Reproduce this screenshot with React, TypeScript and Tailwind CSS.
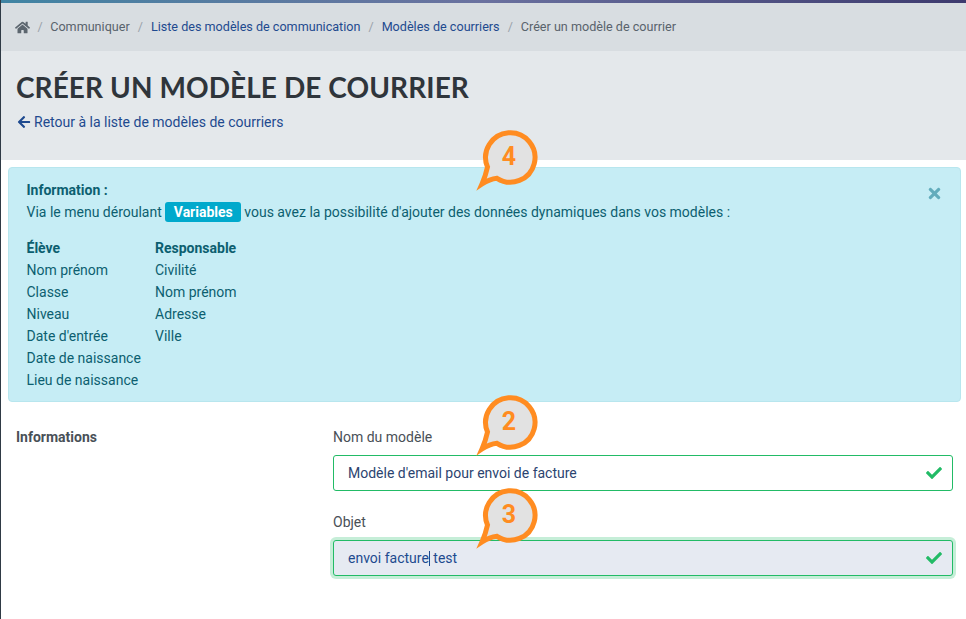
import { FaHome, FaArrowLeft, FaTimes, FaCheck } from "react-icons/fa";

function Callout({ n, className }: { n: string; className: string }) {
  return (
    <div className={`absolute w-[62px] h-[62px] ${className}`}>
      <svg width="62" height="62" viewBox="0 0 62 62" className="absolute inset-0 overflow-visible">
        <path
          d="M14.5 38 A24.7 24.7 0 1 1 24 49.3 Q16.5 50 9 55 Q12.5 47 14.5 38 Z"
          fill="#e2e2e2"
          stroke="#ff8c21"
          strokeWidth="5"
          strokeLinejoin="miter"
          strokeMiterlimit="10"
        />
      </svg>
      <span className="absolute left-[13px] top-[13px] w-[46px] text-center text-[25px] leading-[30px] font-bold text-[#ff8c21] font-['Roboto',sans-serif]">
        {n}
      </span>
    </div>
  );
}

const Sep = () => <span className="px-[8px] text-[#9aa3ab]">/</span>;

export default function App() {
  return (
    <div className="relative w-[966px] h-[619px] overflow-hidden bg-white border-l border-[#2f3a45] font-['Roboto',sans-serif] text-[14px] text-[#495057]">
      <div className="h-[3px] bg-gradient-to-r from-[#3f84a3] via-[#6a719f] to-[#3d3a6e]" />
      <nav className="h-[48px] bg-[#d8dde1] flex items-center pl-[14px] text-[12.6px] text-[#59636c]">
        <FaHome className="text-[15px] text-[#5c666f]" />
        <span className="px-[7.5px] text-[#9aa3ab]">/</span>
        <span>Communiquer</span>
        <Sep />
        <span className="text-[#1e4a8f]">Liste des modèles de communication</span>
        <Sep />
        <span className="text-[#1e4a8f]">Modèles de courriers</span>
        <Sep />
        <span>Créer un modèle de courrier</span>
      </nav>
      <header className="h-[109px] bg-[#e4e8eb] pl-[15px] pt-[18px]">
        <h1 className="text-[28px] leading-[36px] font-bold tracking-[0.08px] text-[#2f353b] font-['Lato',sans-serif]">
          CRÉER UN MODÈLE DE COURRIER
        </h1>
        <a className="mt-[7px] flex items-center text-[#1e4a8f] leading-[20px] pl-[1px]">
          <FaArrowLeft className="text-[14px] mr-[3px]" />
          Retour à la liste de modèles de courriers
        </a>
      </header>
      <div className="mx-[7px] mt-[7px] w-[953px] h-[235px] relative rounded-[4px] border border-[#b8e6ee] bg-[#c6edf5] text-[#0c5f70] pt-[11px] pl-[17.5px] leading-[22px]">
        <div className="font-bold">Information :</div>
        <div className="flex items-center">
          Via le menu déroulant
          <span className="ml-[3.5px] mr-[3px] h-[20px] px-[8.5px] rounded-[3px] bg-[#00a9cc] text-white font-bold flex items-center">Variables</span>
          vous avez la possibilité d'ajouter des données dynamiques dans vos modèles :
        </div>
        <div className="flex mt-[14px]">
          <div className="w-[128.5px]">
            <div className="font-bold">Élève</div>
            <div>Nom prénom</div>
            <div>Classe</div>
            <div>Niveau</div>
            <div>Date d'entrée</div>
            <div>Date de naissance</div>
            <div>Lieu de naissance</div>
          </div>
          <div>
            <div className="font-bold">Responsable</div>
            <div>Civilité</div>
            <div>Nom prénom</div>
            <div>Adresse</div>
            <div>Ville</div>
          </div>
        </div>
        <FaTimes className="absolute right-[17px] top-[17px] text-[17px] text-[#62acbc]" />
      </div>
      <section className="flex pl-[15px] pt-[26px]">
        <div className="w-[317px] font-bold leading-[18px]">Informations</div>
        <div className="w-[620px]">
          <label className="block leading-[18px] pb-[9px]">Nom du modèle</label>
          <div className="h-[36px] rounded-[3px] border border-[#22bb66] flex items-center justify-between pl-[14px] pr-[10px] text-[#2c4470]">
            Modèle d'email pour envoi de facture
            <FaCheck className="text-[16px] text-[#22bb66]" />
          </div>
          <label className="block leading-[18px] pt-[22px] pb-[9px]">Objet</label>
          <div className="h-[36px] rounded-[3px] border border-[#22bb66] bg-[#e6eaf2] shadow-[0_0_0_3px_#c6eed8] flex items-center justify-between pl-[14px] pr-[10px] text-[#1e4a8f]">
            <span>envoi facture<span className="inline-block w-px h-[15px] align-middle bg-[#1e4a8f]" /> test</span>
            <FaCheck className="text-[16px] text-[#22bb66]" />
          </div>
        </div>
      </section>
      <Callout n="4" className="left-[472px] top-[129px]" />
      <Callout n="2" className="left-[472px] top-[394px]" />
      <Callout n="3" className="left-[472px] top-[487px]" />
    </div>
  );
}
